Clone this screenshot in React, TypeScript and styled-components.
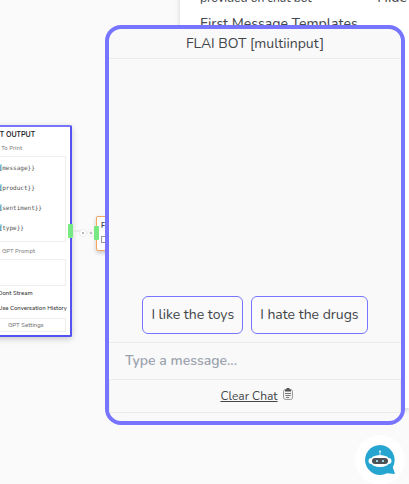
import React from "react";
import styled, { createGlobalStyle } from "styled-components";

const GlobalStyle = createGlobalStyle`
  * { box-sizing: border-box; }
  body {
    margin: 0;
    background: #fafafa;
    color: #424549;
    font-family: Nunito, "Noto Sans", "Open Sans", sans-serif;
  }
  button, input { font: inherit; color: inherit; }
`;

const Page = styled.main`
  position: relative;
  min-height: 100vh;
  overflow: hidden;
`;

const Node = styled.section`
  position: absolute;
  top: 125px;
  left: -48px;
  width: 120px;
  padding: 4px 4px 3px;
  display: flex;
  flex-direction: column;
  background: #fff;
  border: 2px solid #5552f4;
  border-top-color: #7775fb;
  border-radius: 2px;
  box-shadow: 0 2px 6px rgba(0, 0, 0, 0.2);
  font-size: 6px;
  line-height: 8px;
`;

const NodeTitle = styled.h2`
  margin: 0;
  padding-right: 31px;
  text-align: right;
  font-size: 7px;
  line-height: 8px;
  font-weight: 700;
  color: #25272a;
`;

const NodeCaption = styled.span<{ $end: number }>`
  padding: 5px ${(p) => p.$end}px 4px 0;
  text-align: right;
  color: #777;
`;

const Variables = styled.ul`
  margin: 0;
  padding: 1px 0 0 36px;
  height: 86px;
  list-style: none;
  border: 1px solid #eee;
  font: 6px/20px "DejaVu Sans Mono", monospace;
  color: #555;
`;

const Brace = styled.span`
  background: #a9e6ee;
`;

const Prompt = styled.textarea`
  display: block;
  width: 100%;
  height: 27px;
  resize: none;
  background: #fff;
  border: 1px solid #eee;
`;

const NodeOption = styled.label`
  height: 15px;
  padding: 3px 0 0 40px;
  white-space: nowrap;
  font-weight: 500;
  color: #333;
`;

const NodeButton = styled.button`
  height: 14px;
  margin-top: 2px;
  padding: 0 0 0 49px;
  text-align: left;
  line-height: 12px;
  font-weight: 500;
  background: #fff;
  color: #777;
  border: 1px solid #eee;
`;

const Connector = styled.div`
  position: absolute;
  top: 223px;
  left: 68px;
  width: 31px;
  height: 17px;
  display: flex;
  justify-content: space-between;
`;

const Port = styled.span<{ $low?: boolean }>`
  width: 5px;
  height: 14px;
  margin-top: ${(p) => (p.$low ? 3 : 1)}px;
  background: #76e982;
  border-radius: 1px;
`;

const NextNode = styled.section`
  position: absolute;
  top: 216px;
  left: 96px;
  width: 60px;
  height: 35px;
  padding: 4px;
  display: flex;
  flex-direction: column;
  gap: 5px;
  background: #fff;
  border: 1px solid #f5a65b;
  border-radius: 2px;
  box-shadow: 0 2px 4px rgba(0, 0, 0, 0.2);
  font-size: 7px;
  line-height: 10px;
  font-weight: 700;
`;

const NextTick = styled.input`
  appearance: none;
  width: 7px;
  height: 7px;
  margin: 0;
  border: 1px solid #999;
`;

const Settings = styled.section`
  position: absolute;
  top: -12px;
  left: 179px;
  right: 0;
  height: 420px;
  padding: 0 2px 0 20px;
  background: #fff;
  border-left: 1px solid #e8eaee;
  box-shadow: 0 3px 4px rgba(90, 100, 120, 0.2);
  color: #474a50;
  font-weight: 500;
`;

const SettingsRow = styled.div`
  display: flex;
  justify-content: space-between;
  font-size: 12px;
  line-height: 20px;
`;

const HideButton = styled.button`
  padding: 0;
  border: 0;
  background: none;
  font-size: 14px;
  line-height: 20px;
`;

const SettingsTitle = styled.h3`
  margin: 6px 0 0;
  font-size: 14px;
  line-height: 20px;
  font-weight: 500;
`;

const Chat = styled.section`
  position: absolute;
  top: 25px;
  right: 4px;
  width: 300px;
  height: 400px;
  display: flex;
  flex-direction: column;
  overflow: hidden;
  background: #f9f9f9;
  border: 4px solid #7775ff;
  border-radius: 16px;
`;

const ChatHeader = styled.h1`
  margin: 0;
  height: 30px;
  font-size: 14px;
  line-height: 29px;
  font-weight: 400;
  text-align: center;
  border-bottom: 1px solid #ececec;
`;

const Replies = styled.div`
  flex: 1;
  display: flex;
  align-items: flex-end;
  justify-content: center;
  gap: 8px;
  padding-bottom: 8px;
`;

const Reply = styled.button`
  height: 38px;
  padding: 0 8px 2px;
  font-size: 14px;
  white-space: nowrap;
  background: #fafafa;
  border: 1px solid #7775ff;
  border-radius: 6px;
`;

const MessageInput = styled.input`
  width: 100%;
  height: 37px;
  padding: 0 16px 2px;
  font-size: 14px;
  font-weight: 600;
  background: transparent;
  border: 0;
  border-top: 1px solid #ececec;
  outline: none;
  &::placeholder { color: #9ca3af; opacity: 1; }
`;

const ChatFooter = styled.footer`
  height: 34px;
  margin-bottom: 8px;
  padding-left: 4px;
  display: flex;
  align-items: center;
  justify-content: center;
  border: 1px solid #ececec;
`;

const ClearButton = styled.button`
  display: flex;
  gap: 4px;
  padding: 0;
  border: 0;
  background: none;
  font-size: 12px;
  line-height: 16px;
`;

const Underlined = styled.span`
  text-decoration: underline;
`;

const Launcher = styled.button`
  position: absolute;
  top: 435px;
  right: 4px;
  width: 50px;
  height: 50px;
  padding: 0;
  display: grid;
  place-items: center;
  background: #fff;
  border: 0;
  border-radius: 50%;
`;

const variables = ["message", "product", "sentiment", "type"];

function Wire() {
  return (
    <svg width="21" height="17" viewBox="0 0 21 17" fill="none" aria-hidden="true">
      <path d="M0 8h7l3 2h11" stroke="#ddd" />
      <circle cx="10" cy="10" r="3.5" fill="#fff" stroke="#eee" />
      <circle cx="18" cy="10" r="3.5" fill="#fff" stroke="#eee" />
      <path d="m9 9 2 2m0-2-2 2M16.500 10h3M18 8.500v3" stroke="#999" strokeWidth=".7" />
    </svg>
  );
}

function Clipboard() {
  return (
    <svg width="12" height="13" viewBox="0 0 12 13" fill="none" aria-hidden="true">
      <rect x="1.500" y="1.500" width="9" height="10" rx="2" stroke="#999" />
      <rect x="3" y="3" width="6" height="7" fill="#f4f4f4" stroke="#ddd" strokeWidth=".6" />
      <path d="M3 1.500h1.500V0h3v1.500H9v2H3z" fill="#555" />
      <path d="M3 5.500h6M3.500 7.500h5M4 9.500h3" stroke="#777" />
    </svg>
  );
}

function Robot() {
  return (
    <svg width="32" height="32" viewBox="0 0 32 32" aria-hidden="true">
      <path d="M16 1a15 15 0 1 0 7 28.300l8 .7-2.200-6.800A15 15 0 0 0 16 1z" fill="#27a5d1" />
      <path d="M16 8v3" stroke="#fff" strokeWidth=".7" />
      <circle cx="16" cy="7.500" r=".9" fill="#fff" />
      <path d="M9 12.500q7-3 14 0l1.500 1.500a3 3 0 0 1 0 6l-1.500 1.500q-7 3-14 0l-1.500-1.500a3 3 0 0 1 0-6z" fill="#fff" />
      <rect x="8" y="14" width="16" height="6" rx="3" fill="#4c4f53" />
      <rect x="12" y="16" width="2" height="2" rx=".5" fill="#9edcef" />
      <rect x="18" y="16" width="2" height="2" rx=".5" fill="#9edcef" />
    </svg>
  );
}

export default function App() {
  return (
    <Page>
      <GlobalStyle />
      <Node>
        <NodeTitle>GPT OUTPUT</NodeTitle>
        <NodeCaption $end={44}>To Print</NodeCaption>
        <Variables>
          {variables.map((name) => (
            <li key={name}><Brace>{"{{"}</Brace>{name}{"}}"}</li>
          ))}
        </Variables>
        <NodeCaption $end={31}>GPT Prompt</NodeCaption>
        <Prompt aria-label="GPT Prompt" />
        <NodeOption>Dont Stream</NodeOption>
        <NodeOption>Use Conversation History</NodeOption>
        <NodeButton type="button">GPT Settings</NodeButton>
      </Node>
      <NextNode>
        F
        <NextTick type="checkbox" aria-label="F" />
      </NextNode>
      <Connector><Port /><Wire /><Port $low /></Connector>
      <Settings>
        <SettingsRow>
          <span>provided on chat bot</span>
          <HideButton type="button">Hide</HideButton>
        </SettingsRow>
        <SettingsTitle>First Message Templates</SettingsTitle>
      </Settings>
      <Chat>
        <ChatHeader>FLAI BOT [multiinput]</ChatHeader>
        <Replies>
          <Reply type="button">I like the toys</Reply>
          <Reply type="button">I hate the drugs</Reply>
        </Replies>
        <MessageInput aria-label="Message" placeholder="Type a message..." />
        <ChatFooter>
          <ClearButton type="button"><Underlined>Clear Chat</Underlined><Clipboard /></ClearButton>
        </ChatFooter>
      </Chat>
      <Launcher type="button" aria-label="Open chat"><Robot /></Launcher>
    </Page>
  );
}
